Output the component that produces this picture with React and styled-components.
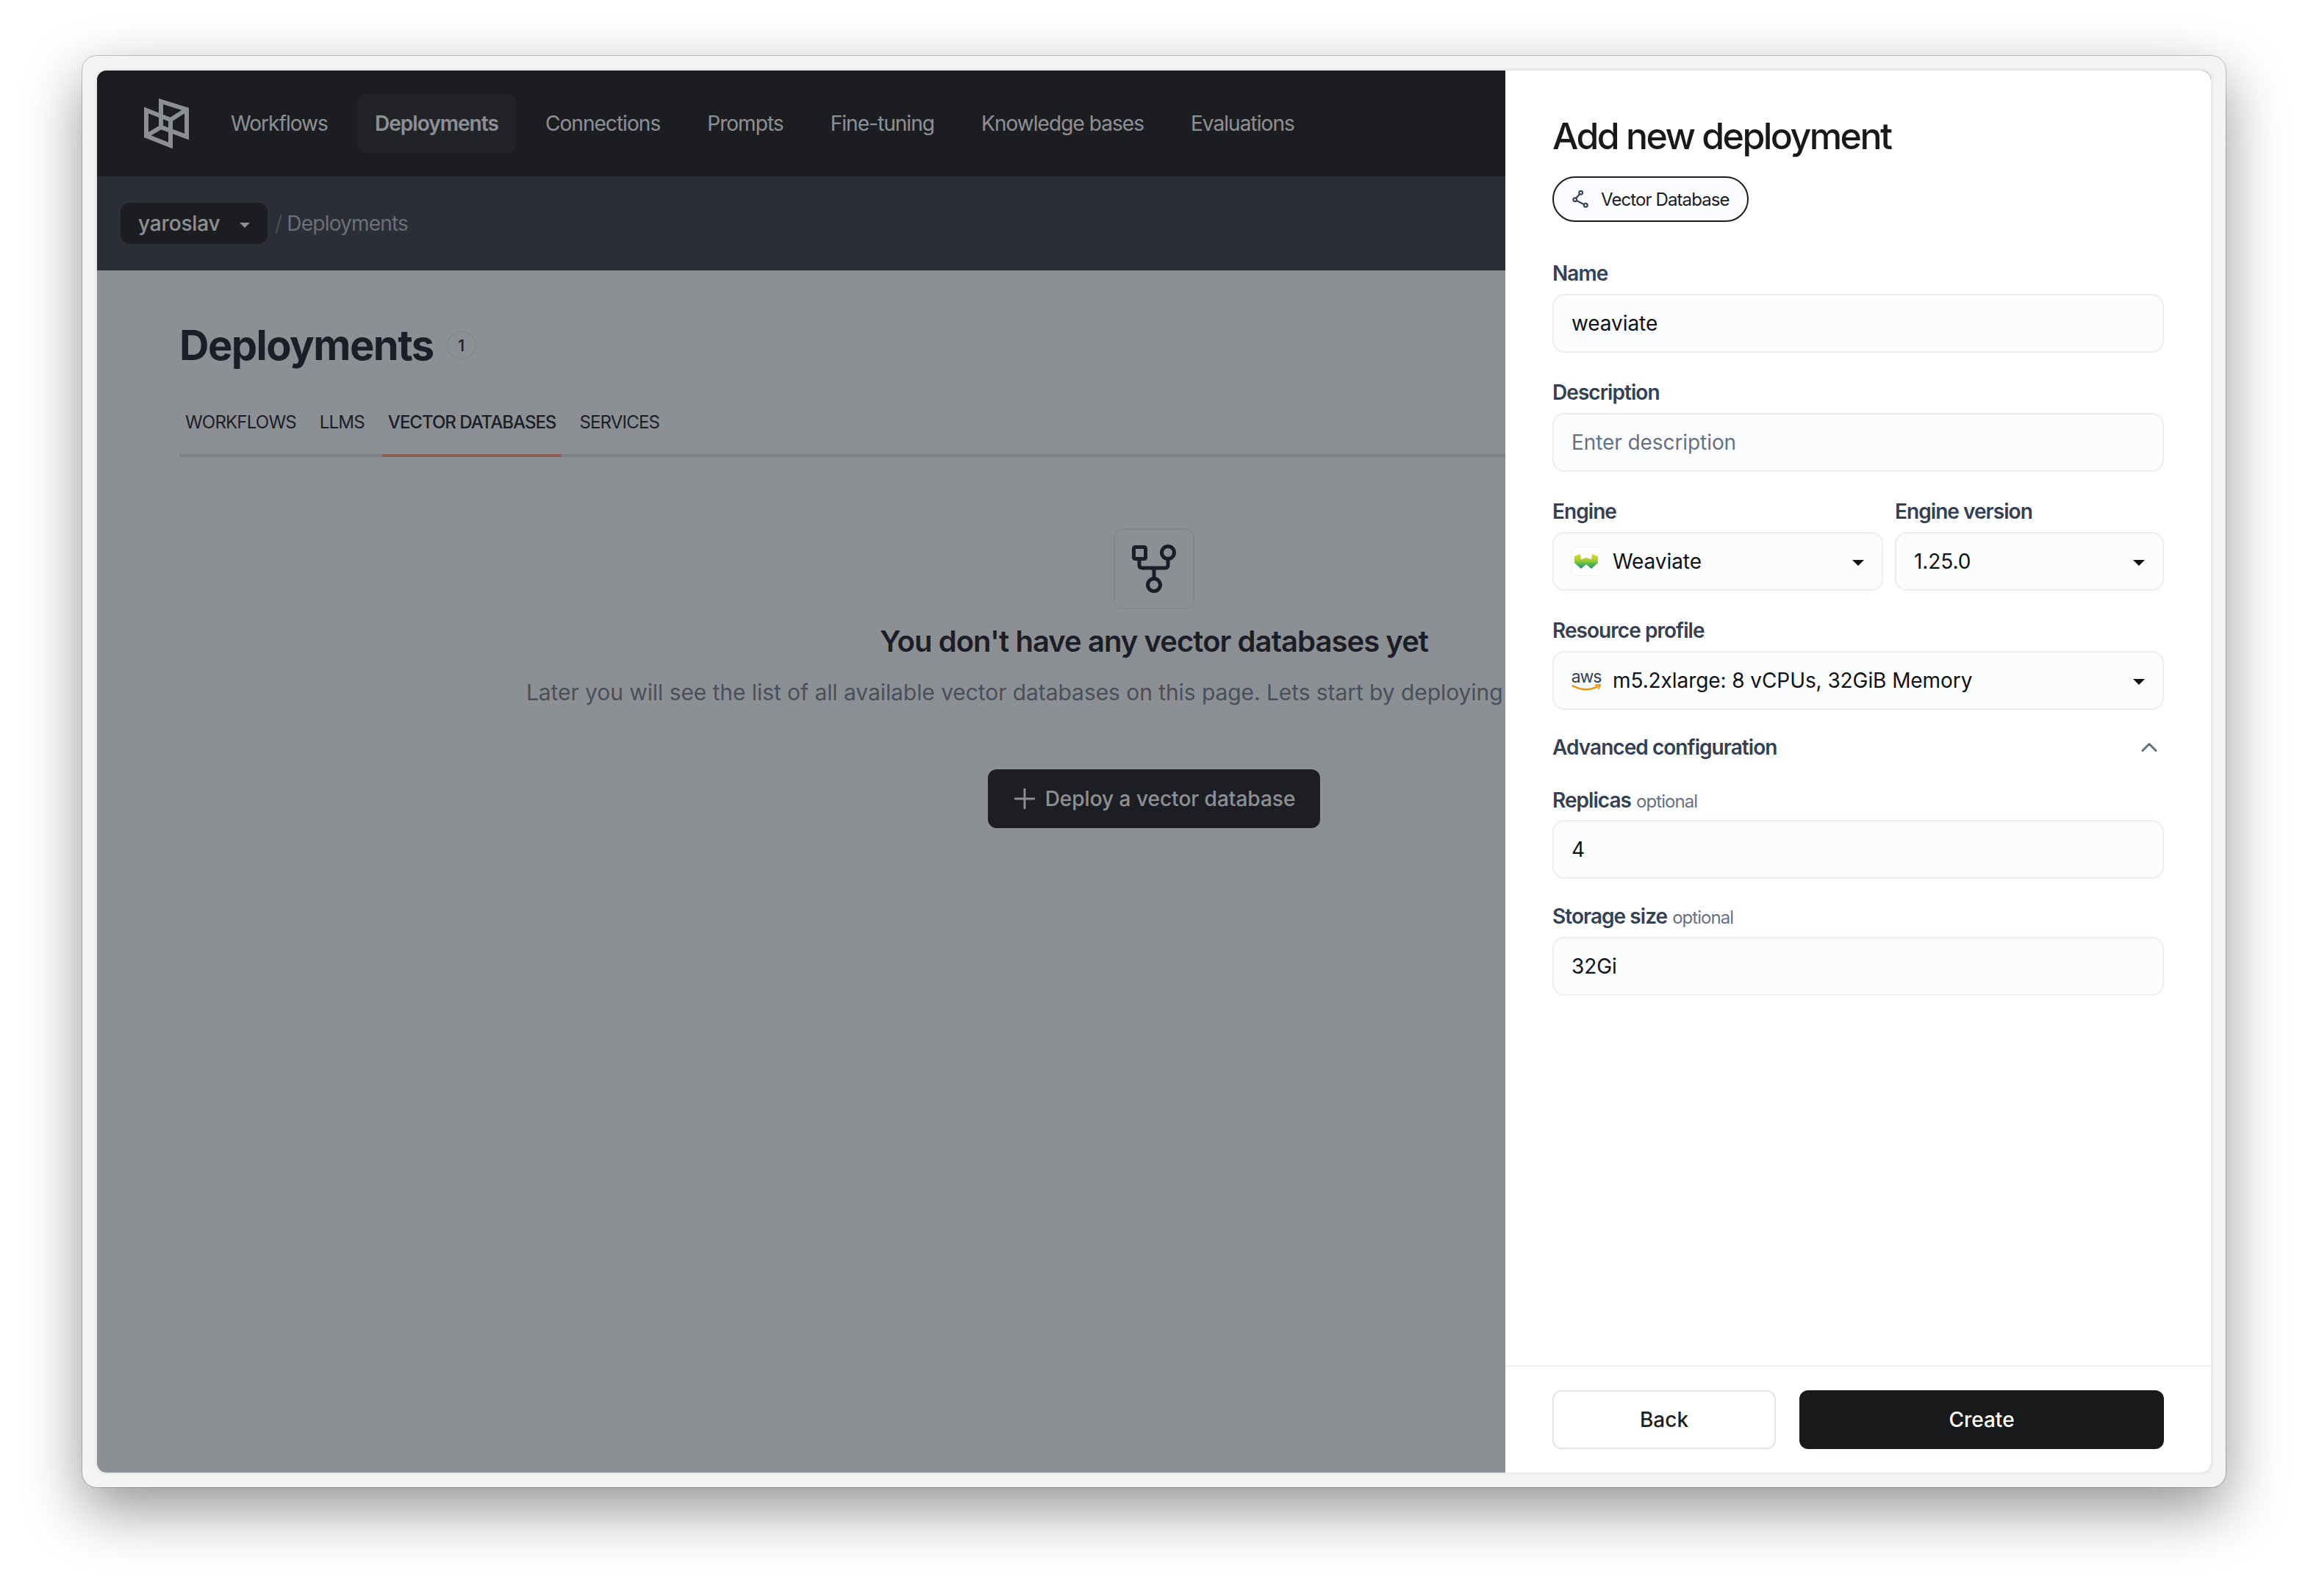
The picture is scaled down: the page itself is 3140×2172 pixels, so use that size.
import React from "react";
import styled, { createGlobalStyle } from "styled-components";
import { ChevronUp, Plus } from "lucide-react";

const GlobalStyle = createGlobalStyle`
  html, body {
    margin: 0;
    padding: 0;
    background: #ffffff;
  }
  * {
    box-sizing: border-box;
  }
  body {
    font-family: Inter, "Liberation Sans", sans-serif;
  }
`;

const Stage = styled.div`
  width: 3140px;
  height: 2172px;
  padding: 76px 112px 148px;
  background: #ffffff;
  overflow: hidden;
`;

const Frame = styled.div`
  height: 1948px;
  padding: 20px;
  background: #f5f4f4;
  border-radius: 20px;
  box-shadow: 0 0 0 1px rgba(0, 0, 0, 0.2), 0 30px 80px rgba(0, 0, 0, 0.42);
`;

const Screen = styled.div`
  position: relative;
  height: 100%;
  background: #ffffff;
  border-radius: 13px;
  overflow: hidden;
  box-shadow: 0 0 6px rgba(0, 0, 0, 0.12);
`;

const Overlay = styled.div`
  position: absolute;
  inset: 0;
  background: rgba(25, 32, 41, 0.5);
`;

const TopNav = styled.nav`
  display: flex;
  align-items: center;
  height: 144px;
  padding: 0 32px 0 64px;
  background: #1f1a19;
`;

const LogoMark = styled.svg`
  width: 61px;
  height: 68px;
  margin-right: 33px;
`;

const NavItem = styled.a`
  display: flex;
  align-items: center;
  height: 80px;
  padding: 0 24px;
  margin-right: 16px;
  border-radius: 12px;
  color: #ffffff;
  font-size: 28px;
  letter-spacing: -0.95px;
  font-weight: ${(p) => (p.$active ? 600 : 400)};
  background: ${(p) => (p.$active ? "#2b2625" : "transparent")};
`;

const SubBar = styled.div`
  display: flex;
  align-items: center;
  height: 128px;
  padding: 0 32px;
  background: #3d3c43;
`;

const Workspace = styled.div`
  display: flex;
  align-items: center;
  justify-content: space-between;
  width: 200px;
  height: 56px;
  padding: 0 24px;
  border-radius: 12px;
  background: #1f1a19;
  color: #ffffff;
  font-size: 28px;
  font-weight: 500;
  letter-spacing: -0.15px;
`;

const Caret = styled.span`
  display: block;
  flex: none;
  width: 0;
  height: 0;
  border-left: ${(p) => p.$size || 7}px solid transparent;
  border-right: ${(p) => p.$size || 7}px solid transparent;
  border-top: ${(p) => p.$size || 7}px solid ${(p) => p.$color || "#ffffff"};
  margin-top: 4px;
`;

const Crumb = styled.span`
  margin-left: 10px;
  color: #bbbec6;
  font-size: 28px;
  letter-spacing: -0.8px;
`;

const CrumbSlash = styled.span`
  color: #7b7e88;
`;

const Content = styled.main`
  padding: 68px 112px 0;
`;

const TitleRow = styled.div`
  display: flex;
  align-items: center;
  height: 68px;
  gap: 18px;
`;

const PageTitle = styled.h1`
  margin: 0;
  color: #1c1d22;
  font-size: 56px;
  font-weight: 700;
  letter-spacing: -1.5px;
`;

const CountBadge = styled.span`
  display: flex;
  align-items: center;
  justify-content: center;
  width: 40px;
  height: 40px;
  border: 2px solid #f1f0f2;
  border-radius: 50%;
  color: #1c1d22;
  font-size: 22px;
  font-weight: 500;
`;

const Tabs = styled.div`
  display: flex;
  height: 86px;
  margin-top: 32px;
  border-bottom: 4px solid #e2e3e6;
`;

const Tab = styled.div`
  display: flex;
  align-items: center;
  height: 86px;
  padding: 0 8px 6px;
  margin-right: 16px;
  color: #1c1d22;
  font-size: 24px;
  font-weight: ${(p) => (p.$active ? 500 : 400)};
  letter-spacing: ${(p) => (p.$active ? -1 : -0.8)}px;
  text-transform: uppercase;
  border-bottom: 4px solid ${(p) => (p.$active ? "#ff9c7e" : "transparent")};
`;

const EmptyState = styled.section`
  display: flex;
  flex-direction: column;
  align-items: center;
  padding-top: 97px;
`;

const EmptyIcon = styled.div`
  display: flex;
  align-items: center;
  justify-content: center;
  width: 110px;
  height: 110px;
  border: 2px solid #f1f0f2;
  border-radius: 12px;
  background: #fffffc;
`;

const EmptyTitle = styled.h2`
  margin: 18px 0 0;
  color: #1c1d22;
  font-size: 40px;
  line-height: 52px;
  font-weight: 600;
  letter-spacing: -0.95px;
`;

const EmptyText = styled.p`
  margin: 21px 0 0;
  color: #7b7e86;
  font-size: 30px;
  line-height: 44px;
  white-space: nowrap;
  letter-spacing: -0.07px;
`;

const DeployButton = styled.button`
  display: flex;
  align-items: center;
  gap: 6px;
  height: 80px;
  margin-top: 83px;
  padding: 0 34px 0 28px;
  border: none;
  border-radius: 12px;
  background: #211c1d;
  color: #ffffff;
  font-family: inherit;
  font-size: 28px;
  font-weight: 500;
`;

const Drawer = styled.aside`
  position: absolute;
  top: 0;
  right: 0;
  bottom: 0;
  display: flex;
  flex-direction: column;
  width: 960px;
  background: #ffffff;
`;

const DrawerBody = styled.div`
  flex: 1;
  padding: 55px 64px 0;
`;

const DrawerTitle = styled.h2`
  margin: 0;
  color: #18191b;
  font-size: 50px;
  line-height: 68px;
  font-weight: 500;
  letter-spacing: -2.55px;
`;

const Chip = styled.div`
  display: inline-flex;
  align-items: center;
  gap: 16px;
  height: 62px;
  margin-top: 21px;
  padding: 0 24px;
  border: 2px solid #1b1c1f;
  border-radius: 31px;
  background: #fbfcff;
  color: #1b1c1f;
  font-size: 24px;
  letter-spacing: -0.9px;
`;

const Field = styled.div`
  margin-top: ${(p) => p.$top ?? 34}px;
`;

const Label = styled.div`
  height: 40px;
  margin-bottom: ${(p) => p.$gap ?? 8}px;
  color: #344054;
  font-size: 28px;
  line-height: 40px;
  font-weight: 600;
  letter-spacing: -0.95px;
`;

const Optional = styled.span`
  margin-left: 7px;
  color: #667085;
  font-size: 24px;
  font-weight: 400;
  letter-spacing: -0.95px;
`;

const InputBox = styled.div`
  display: flex;
  align-items: center;
  height: 80px;
  padding: 0 24px;
  border: 2px solid #eceef2;
  border-radius: 16px;
  background: #fbfcfe;
  color: ${(p) => (p.$placeholder ? "#667085" : "#101114")};
  font-size: 28px;
  letter-spacing: -0.08px;
`;

const SelectRow = styled.div`
  display: grid;
  grid-template-columns: 450px 366px;
  gap: 16px;
`;

const SelectValue = styled.span`
  flex: 1;
  margin-left: ${(p) => (p.$withLogo ? 16 : 0)}px;
`;

const LogoTile = styled.span`
  display: flex;
  align-items: center;
  justify-content: center;
  flex: none;
  width: 40px;
  height: 40px;
  border-radius: 4px;
  background: #ffffff;
  border: 1px solid #f2f3f6;
`;

const AwsLogo = styled.span`
  display: flex;
  flex-direction: column;
  align-items: center;
  flex: none;
  width: 40px;
  color: #344054;
  font-size: 23px;
  line-height: 20px;
  letter-spacing: -1.2px;
`;

const Disclosure = styled.div`
  display: flex;
  align-items: center;
  justify-content: space-between;
  height: 40px;
  margin-top: 31px;
  padding-right: 2px;
  color: #344054;
  font-size: 28px;
  font-weight: 600;
  letter-spacing: -0.95px;
`;

const DrawerFooter = styled.footer`
  display: grid;
  grid-template-columns: 304px 496px;
  gap: 32px;
  padding: 32px 64px;
  border-top: 2px solid #eeeef2;
`;

const FooterButton = styled.button`
  height: 80px;
  border-radius: 12px;
  border: ${(p) => (p.$primary ? "none" : "2px solid #e3e3e5")};
  background: ${(p) => (p.$primary ? "#18191b" : "#ffffff")};
  color: ${(p) => (p.$primary ? "#ffffff" : "#1f2024")};
  font-family: inherit;
  font-size: 28px;
  font-weight: 500;
`;

function BrandLogo() {
  return (
    <LogoMark viewBox="0 0 61 68" fill="none" stroke="#ffffff" strokeWidth="6">
      <path d="M3 16 L36 29 L36 64 L3 51 Z" />
      <path d="M23 4 L58 15 L58 52 L23 39 Z" />
      <path d="M58 15 L36 29 M3 51 L23 39" />
    </LogoMark>
  );
}

function ForkIcon() {
  return (
    <svg width="64" height="68" viewBox="0 0 64 68" fill="none" stroke="#1c1d22" strokeWidth="5">
      <rect x="4.5" y="4.5" width="16" height="16" rx="2" />
      <circle cx="51" cy="12" r="8.5" />
      <circle cx="32" cy="56" r="8.5" />
      <path d="M12 21 V29 Q12 33 16 33 H47 Q51 33 51 29 V21 M32 33 V47" />
    </svg>
  );
}

function ShareIcon() {
  return (
    <svg width="24" height="24" viewBox="0 0 24 24" fill="none" stroke="#3a4458" strokeWidth="2.2">
      <circle cx="12.7" cy="3.2" r="2.4" />
      <circle cx="4.7" cy="12.7" r="2.4" />
      <circle cx="19.3" cy="20.3" r="2.4" />
      <path d="M11.2 5 L6.2 10.8 M6.9 13.9 L17.2 19.2" />
    </svg>
  );
}

function WeaviateLogo() {
  return (
    <svg width="32" height="20" viewBox="0 0 32 20">
      <defs>
        <linearGradient id="wv" x1="0" y1="0" x2="0" y2="1">
          <stop offset="0" stopColor="#e2d82a" />
          <stop offset="0.42" stopColor="#a9cd36" />
          <stop offset="0.68" stopColor="#4fb84d" />
          <stop offset="1" stopColor="#2a8a80" />
        </linearGradient>
      </defs>
      <path
        d="M0 3 L8 0 L9 7 L16 5 L23 7 L24 0 L32 3 L32 12 L23 20 L16 14 L9 20 L0 12 Z"
        fill="url(#wv)"
      />
    </svg>
  );
}

function AwsMark() {
  return (
    <AwsLogo>
      aws
      <svg width="40" height="10" viewBox="0 0 40 10" fill="none">
        <path d="M1 2 Q19 12 36 3" stroke="#f29100" strokeWidth="2.4" />
        <path d="M32 1.5 L39 1 L36.5 7" stroke="#f29100" strokeWidth="2" />
      </svg>
    </AwsLogo>
  );
}

export default function App() {
  const navItems = ["Workflows", "Deployments", "Connections", "Prompts", "Fine-tuning", "Knowledge bases", "Evaluations"];
  const tabs = ["Workflows", "LLMs", "Vector databases", "Services"];

  return (
    <Stage>
      <GlobalStyle />
      <Frame>
        <Screen>
          <TopNav>
            <BrandLogo />
            {navItems.map((item) => (
              <NavItem key={item} $active={item === "Deployments"}>
                {item}
              </NavItem>
            ))}
          </TopNav>
          <SubBar>
            <Workspace>
              yaroslav
              <Caret $size={7} />
            </Workspace>
            <Crumb>
              <CrumbSlash>/</CrumbSlash> Deployments
            </Crumb>
          </SubBar>
          <Content>
            <TitleRow>
              <PageTitle>Deployments</PageTitle>
              <CountBadge>1</CountBadge>
            </TitleRow>
            <Tabs>
              {tabs.map((tab) => (
                <Tab key={tab} $active={tab === "Vector databases"}>
                  {tab}
                </Tab>
              ))}
            </Tabs>
            <EmptyState>
              <EmptyIcon>
                <ForkIcon />
              </EmptyIcon>
              <EmptyTitle>You don't have any vector databases yet</EmptyTitle>
              <EmptyText>
                Later you will see the list of all available vector databases on this page. Lets start by deploying your first vector database.
              </EmptyText>
              <DeployButton>
                <Plus size={44} strokeWidth={1.6} color="#ffffff" />
                Deploy a vector database
              </DeployButton>
            </EmptyState>
          </Content>
          <Overlay />
          <Drawer>
            <DrawerBody>
              <DrawerTitle>Add new deployment</DrawerTitle>
              <Chip>
                <ShareIcon />
                Vector Database
              </Chip>
              <Field $top={50}>
                <Label>Name</Label>
                <InputBox>weaviate</InputBox>
              </Field>
              <Field>
                <Label>Description</Label>
                <InputBox $placeholder>Enter description</InputBox>
              </Field>
              <Field>
                <SelectRow>
                  <div>
                    <Label>Engine</Label>
                    <InputBox>
                      <LogoTile>
                        <WeaviateLogo />
                      </LogoTile>
                      <SelectValue $withLogo>Weaviate</SelectValue>
                      <Caret $size={8} $color="#101114" />
                    </InputBox>
                  </div>
                  <div>
                    <Label>Engine version</Label>
                    <InputBox>
                      <SelectValue>1.25.0</SelectValue>
                      <Caret $size={8} $color="#101114" />
                    </InputBox>
                  </div>
                </SelectRow>
              </Field>
              <Field>
                <Label>Resource profile</Label>
                <InputBox>
                  <AwsMark />
                  <SelectValue $withLogo>m5.2xlarge: 8 vCPUs, 32GiB Memory</SelectValue>
                  <Caret $size={8} $color="#101114" />
                </InputBox>
              </Field>
              <Disclosure>
                Advanced configuration
                <ChevronUp size={36} strokeWidth={2} color="#667085" />
              </Disclosure>
              <Field $top={32}>
                <Label $gap={7}>
                  Replicas<Optional>optional</Optional>
                </Label>
                <InputBox>4</InputBox>
              </Field>
              <Field $top={31}>
                <Label $gap={8}>
                  Storage size<Optional>optional</Optional>
                </Label>
                <InputBox>32Gi</InputBox>
              </Field>
            </DrawerBody>
            <DrawerFooter>
              <FooterButton>Back</FooterButton>
              <FooterButton $primary>Create</FooterButton>
            </DrawerFooter>
          </Drawer>
        </Screen>
      </Frame>
    </Stage>
  );
}
